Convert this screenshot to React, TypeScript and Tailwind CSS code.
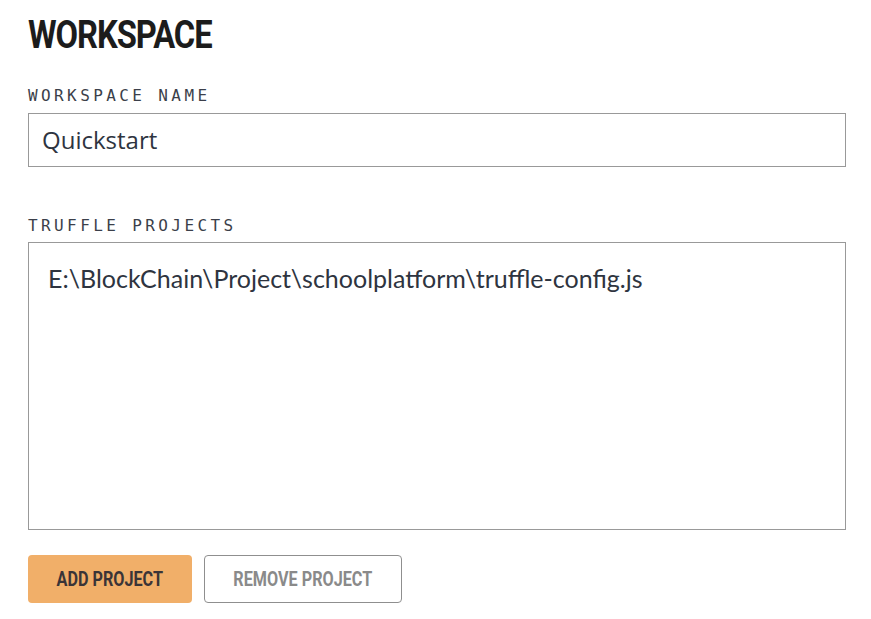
export default function App() {
  const label = "font-['DejaVu_Sans_Mono',monospace] text-[16px] tracking-[3.4px] text-[#3b3f4a] leading-none";
  return (
    <div className="w-[871px] h-[619px] bg-white px-[28px] pt-[17px] font-['Roboto',sans-serif]">
      <div className="w-[818px]">
        <h1 className="text-[38px] font-bold leading-[36px] tracking-[-1.2px] text-[#1c1c1c] origin-left scale-x-[0.86]">
          WORKSPACE
        </h1>
        <div className={`${label} mt-[35px]`}>WORKSPACE NAME</div>
        <div className="mt-[9px] h-[54px] border border-[#999999] flex items-center px-[13px]">
          <span className="font-['Open_Sans',sans-serif] text-[24px] text-[#2e3440]">Quickstart</span>
        </div>
        <div className={`${label} mt-[51px]`}>TRUFFLE PROJECTS</div>
        <div className="mt-[8px] h-[288px] border border-[#999999] px-[19px] pt-[17px]">
          <span className="font-['Lato',sans-serif] text-[25px] text-[#2e3440]">
            E:\BlockChain\Project\schoolplatform\truffle-config.js
          </span>
        </div>
        <div className="mt-[25px] flex items-center gap-[12px]">
          <button className="w-[164px] h-[48px] rounded-[4px] bg-[#f1af69] text-[#3a3437] flex items-center justify-center">
            <span className="text-[20px] font-bold inline-block scale-x-[0.81]">ADD PROJECT</span>
          </button>
          <button className="w-[198px] h-[48px] rounded-[4px] border border-[#8f8f8f] bg-white text-[#8a8a8a] flex items-center justify-center">
            <span className="text-[20px] font-bold inline-block scale-x-[0.81]">REMOVE PROJECT</span>
          </button>
        </div>
      </div>
    </div>
  );
}
